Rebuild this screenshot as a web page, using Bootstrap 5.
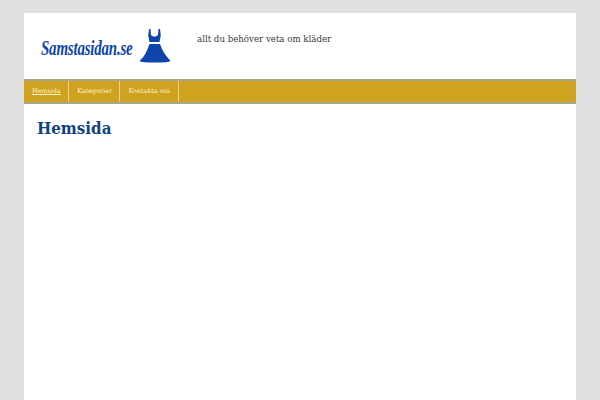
<!DOCTYPE html>
<html lang="sv">
<head>
  <meta charset="UTF-8" />
  <meta name="viewport" content="width=device-width, initial-scale=1.0">
  <title>Samstasidan.se</title>
  <link href="https://cdn.jsdelivr.net/npm/bootstrap@5.3.0/dist/css/bootstrap.min.css" rel="stylesheet">
  <style>
    html, body { height: 100%; overflow: hidden; }
    body {
      background-color: #e0e0e0;
      padding: 13px 24px 0;
      font-family: "DejaVu Serif Condensed", "DejaVu Serif", serif;
      color: #333;
    }
    .page-box { background-color: #fff; min-height: 400px; }
    .site-head { height: 66px; }
    .logo-box { width: 173px; padding-left: 17px; padding-top: 15px; }
    .logo-text {
      width: 98px;
      font-family: "Liberation Serif", serif;
      font-style: italic;
      font-weight: 700;
      font-size: 22px;
      letter-spacing: -0.3px;
      line-height: 1;
      color: #0f45ab;
      margin-top: 9px;
      transform: scaleX(0.68);
      transform-origin: left center;
    }
    .tagline { font-family: "DejaVu Serif", serif; font-size: 8.65px; line-height: 16px; padding-top: 18px; color: #3a3a3a; }
    .main-menu {
      background-color: #cfa31f;
      border-top: 2px solid #a9a78a;
      border-bottom: 2px solid #a9a78a;
      height: 25px;
    }
    .main-menu a {
      font-family: "DejaVu Serif", serif;
      font-size: 6.4px;
      line-height: 21px;
      padding: 0 7.5px 0 8px;
      color: #fff4d6;
      text-decoration: none;
      border-right: 1px solid #e6d28c;
    }
    .main-menu a.active { text-decoration: underline; }
    .page-title {
      font-size: 16.8px;
      font-weight: 700;
      color: #0e4280;
      margin: 0;
      padding: 14px 13px;
      line-height: 20px;
    }
  </style>
</head>
<body>
  <div class="page-box">
    <header class="site-head d-flex">
      <div class="logo-box d-flex align-items-start">
        <div class="logo-text text-nowrap">Samstasidan.se</div>
        <svg width="32" height="36" viewBox="0 0 32 36" class="flex-shrink-0">
          <path fill="#0f45ab" d="M10 1h1.500l.5 6q3.500 3.500 7 0l.5-6H21l.8 6.500-1.300 6.500h-10L9.200 7.500z"/>
          <path fill="#0f45ab" d="M10.500 16h10.500q2 6 4.500 9.500t6 7.500q-2 1.500-15.500 1.500T.5 33q4-3.500 6-7.500T10.500 16z"/>
        </svg>
      </div>
      <div class="tagline">allt du behöver veta om kläder</div>
    </header>
    <nav class="main-menu d-flex">
      <a class="active" href="#">Hemsida</a>
      <a href="#">Kategorier</a>
      <a href="#">Kontakta oss</a>
    </nav>
    <h1 class="page-title">Hemsida</h1>
  </div>
  <script src="https://cdn.jsdelivr.net/npm/bootstrap@5.3.0/dist/js/bootstrap.bundle.min.js"></script>
</body>
</html>
